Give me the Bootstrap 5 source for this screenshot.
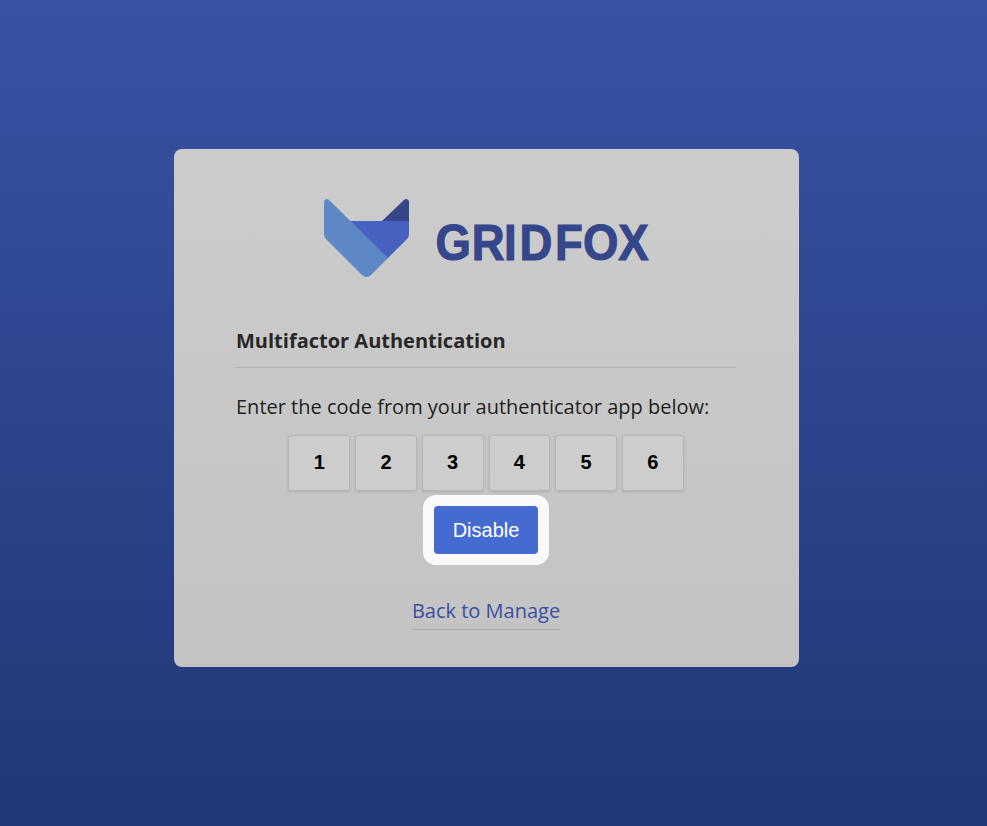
<!DOCTYPE html>
<html lang="en">
<head>
<meta charset="utf-8">
<meta name="viewport" content="width=device-width, initial-scale=1">
<title>Gridfox – Multifactor Authentication</title>
<link href="https://cdn.jsdelivr.net/npm/bootstrap@5.3.0/dist/css/bootstrap.min.css" rel="stylesheet">
<style>
body{font-family:"Open Sans",sans-serif;font-size:20px;line-height:27px;color:#272727;background:linear-gradient(#3953a4,#213777) no-repeat;min-height:826px;padding:149px 188px 0 174px}
.auth-panel{height:518px;border-radius:8px;background:linear-gradient(#cccccc,#c3c3c3);padding:49px 63px 0 62px}
.logo{width:340px;height:80px;overflow:visible}
.logo text{font:bold 50px "Liberation Sans",Arial,sans-serif;fill:#36468a;stroke:#36468a;stroke-width:1.1px}
.heading{font-size:20px;line-height:27px;font-weight:700;margin:49px 0 0;padding-bottom:12px;border-bottom:1px solid #b2b2b2;height:41px}
.prompt{margin:25px 0 15px;color:#1f1f1f;white-space:nowrap}
.codes{gap:5px;height:57px}
.code-box{width:61.7px;height:56px;padding:0 0 1px;border:1px solid #b7b7b7;border-radius:3px;background:#cdcdcd;color:#000;text-align:center;font:bold 20px "Liberation Sans",Arial,sans-serif;box-shadow:0 1px 3px rgba(0,0,0,.13)}
.halo{width:126px;height:70px;margin-top:3px;border-radius:13px;background:#f9f9f9}
.btn-disable{width:104px;height:48px;padding:0;border:0;border-radius:4px;background:#466bd0;color:#fff;font:20px "Liberation Sans",Arial,sans-serif}
.btn-disable:hover{background:#3b5dbb;color:#fff}
.back{margin-top:32px;height:33px;color:#3a4fa3;border-bottom:1px solid #adadad}
</style>
</head>
<body>
<main class="auth-panel d-flex flex-column">
  <svg class="logo align-self-center" viewBox="316 198 340 80" role="img" aria-label="Gridfox">
    <path fill="#364687" d="M382 221L404 200Q407 197.500 409 201V222H382Z"/>
    <path fill="#4661c0" d="M350 221H409V234Q409 237 407 239L387 259Z"/>
    <path fill="#5e88c5" d="M324 202Q325 197.500 329 200L388 258L371 275Q366.500 279 362 275L326 239Q324 237 324 234Z"/>
    <text transform="translate(435.600 259.700) scale(.91 1.010)" x="0 39.600 75.300 92.300 131.200 162 200.700" y="0">GRIDFOX</text>
  </svg>
  <h1 class="heading">Multifactor Authentication</h1>
  <p class="prompt">Enter the code from your authenticator app below:</p>
  <div class="codes d-flex justify-content-center">
    <input class="code-box" value="1" maxlength="1" aria-label="Digit 1">
    <input class="code-box" value="2" maxlength="1" aria-label="Digit 2">
    <input class="code-box" value="3" maxlength="1" aria-label="Digit 3">
    <input class="code-box" value="4" maxlength="1" aria-label="Digit 4">
    <input class="code-box" value="5" maxlength="1" aria-label="Digit 5">
    <input class="code-box" value="6" maxlength="1" aria-label="Digit 6">
  </div>
  <div class="halo d-flex align-items-center justify-content-center align-self-center">
    <button type="button" class="btn btn-disable">Disable</button>
  </div>
  <a href="#" class="back align-self-center text-decoration-none">Back to Manage</a>
</main>
<script src="https://cdn.jsdelivr.net/npm/bootstrap@5.3.0/dist/js/bootstrap.bundle.min.js"></script>
</body>
</html>
